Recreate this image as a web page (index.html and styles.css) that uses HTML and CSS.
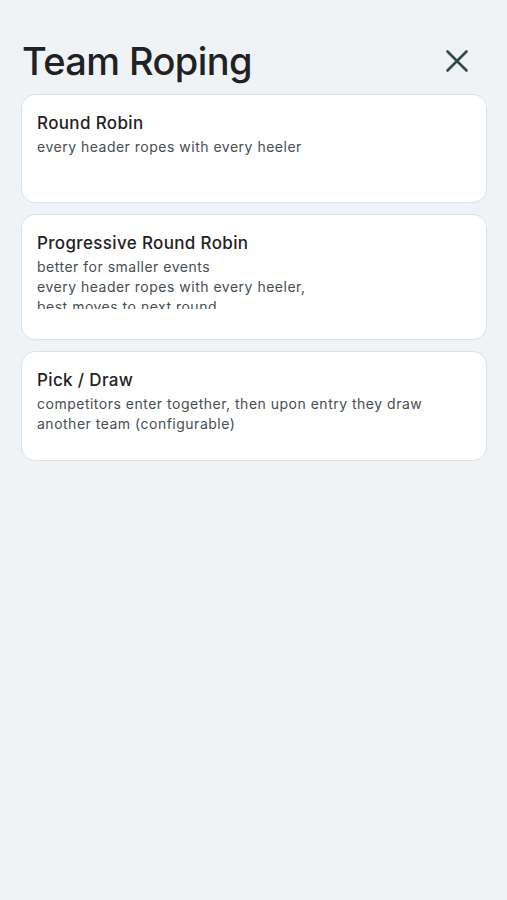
FILE: index.html
```html
<!DOCTYPE html>
<html lang="en">
<head>
<meta charset="utf-8">
<title>Team Roping</title>
<link rel="stylesheet" href="styles.css">
</head>
<body>
<div class="screen">
  <header class="header">
    <h1 class="title">Team Roping</h1>
    <button class="close" aria-label="Close">
      <svg width="24" height="24" viewBox="0 0 24 24" fill="none" stroke="#2f4a4d" stroke-width="2.6" stroke-linecap="round">
        <path d="M2.5 2.5 L21.5 21.5 M21.5 2.5 L2.5 21.5"/>
      </svg>
    </button>
  </header>
  <main class="list">
    <div class="card">
      <div class="card-title">Round Robin</div>
      <div class="card-desc">every header ropes with every heeler</div>
    </div>
    <div class="card">
      <div class="card-title">Progressive Round Robin</div>
      <div class="card-desc card-desc--clipped">better for smaller events<br>every header ropes with every heeler,<br>best moves to next round</div>
    </div>
    <div class="card">
      <div class="card-title">Pick / Draw</div>
      <div class="card-desc">competitors enter together, then upon entry they draw another team (configurable)</div>
    </div>
  </main>
</div>
</body>
</html>
```

FILE: styles.css
```css
html, body {
  margin: 0;
  padding: 0;
  background: #eff3f6;
}
body {
  font-family: Inter, "Noto Sans", "Liberation Sans", sans-serif;
  width: 507px;
  height: 900px;
}
.screen {
  padding: 38px 20px 0 21px;
}
.header {
  display: flex;
  align-items: center;
  justify-content: space-between;
  padding-left: 1px;
  padding-right: 18px;
  height: 46px;
}
.title {
  margin: 0;
  font-size: 38px;
  font-weight: 500;
  letter-spacing: -0.6px;
  color: #1f2224;
  line-height: 46px;
}
.close {
  border: 0;
  background: none;
  padding: 0;
  width: 24px;
  height: 24px;
  display: flex;
}
.list {
  margin-top: 10px;
  display: flex;
  flex-direction: column;
  gap: 11px;
}
.card {
  background: #ffffff;
  border: 1px solid #dbe1e7;
  border-radius: 14px;
  padding: 16px 15px 26px;
  min-height: 109px;
  box-sizing: border-box;
}
.card-title {
  font-size: 17px;
  font-weight: 500;
  color: #1f2224;
  line-height: 24px;
  letter-spacing: 0.35px;
}
.card-desc {
  margin-top: 2px;
  font-size: 14px;
  line-height: 20px;
  color: #454e54;
  letter-spacing: 0.5px;
}
.card-desc--clipped {
  max-height: 52px;
  overflow: hidden;
  margin-bottom: 4px;
}
```
